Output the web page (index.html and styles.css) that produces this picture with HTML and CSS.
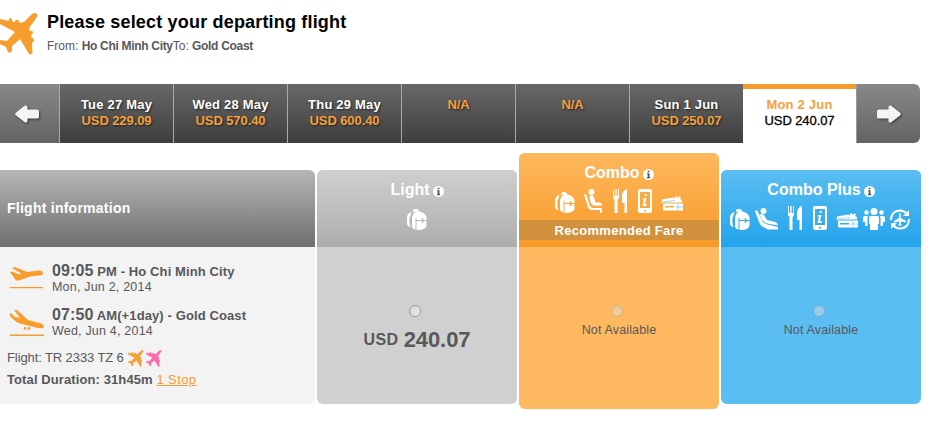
FILE: index.html
```html
<!DOCTYPE html>
<html lang="en">
<head>
<meta charset="utf-8">
<title>Select your departing flight</title>
<link rel="stylesheet" href="styles.css">
</head>
<body>
<svg class="sprite" aria-hidden="true">
  <symbol id="plane" viewBox="0 0 38 42"><path d="M32 1Q36-1 37 1Q38 3 35 7L29 15L30 18Q33 17 33 20L31 22L32 25Q34 25 34 28L32 30L32.500 40Q31 42 29 41L20 26L12 33V38Q10 41 8 39L6 34L0 31V27L7 28L15 19L0 11V6L9 8Q8 5 11 5L13 9H15Q15 6 18 7L20 10L24 9Z"/></symbol>
  <symbol id="bag" viewBox="0 0 20 21"><path fill-rule="evenodd" d="M6 3.500V1.500Q6 0 8 0H10Q12 0 12 2.500Q17 3 19 7Q20 9 19.500 11H17L15.500 9H14.500L15 11H9.500V9H8.500V20.500Q5 20 5 17V10Q5 5 8 3.500V2H7.500V3ZM9.500 12H15L14.500 14H15.500L17 12H19.500V17Q18 21 11 21H9.500Z"/><path d="M4.500 3Q0 4 0 9V15Q1 18 3.500 18L2.500 15Q1.500 10 3.500 6Z"/></symbol>
  <symbol id="seat" viewBox="0 0 18 24"><circle cx="7.500" cy="3" r="3"/><path d="M0 5.500L2 5L6 17Q7 19 9 19H17Q18 19 18 20V24H16V21H8Q5 21 4 18Z"/><path d="M5 7.500Q8 5 10 8L11.500 13.500H16Q18 14 18 16.500H11Q8 17 7 14Z"/></symbol>
  <symbol id="recline" viewBox="0 0 23 22"><circle cx="8.500" cy="3" r="3"/><path d="M0 3L2 2L8 14L11 16L23 19V21.500H13L8 19Q5 17 4 14Z"/><path d="M4.500 6.500Q8 5 9.500 8L12 12L20 14Q23 15 23 17.500L12 15.500Q9 14.500 7.500 12Z"/></symbol>
  <symbol id="food" viewBox="0 0 14 24"><path d="M0 0H1V7H2.300V0H3.700V7H5V0H6V8Q6 10 4.500 11V24H1.500V11Q0 10 0 8ZM14 0V24H11.500V14H9V6Q10 1 14 0Z"/></symbol>
  <symbol id="phone" viewBox="0 0 14 24"><path fill-rule="evenodd" d="M2 0H12Q14 0 14 2V22Q14 24 12 24H2Q0 24 0 22V2Q0 0 2 0ZM2 3V19H12V3ZM6 21V22.500H8V21Z"/><path d="M7 5H9L8.500 7H6.500ZM5 9H8.500L7 15H9L8.500 17H4.500L6 10.500H4.500Z"/></symbol>
  <symbol id="ticket" viewBox="0 0 22 16"><path fill-rule="evenodd" d="M1 4.500L12 2.500L14 3.500L14 1.500H16L17 3L18.500 1L20 2.500L19 4L21 5V7.500H0V6.500H1ZM2 8.500H22V15.500H3Q2 15.500 2 14ZM4 11V12.500H13V11Z"/><path class="cut" d="M14 5.500L2 7M17 8.500V15.500M14.500 12H22"/></symbol>
  <symbol id="people" viewBox="0 0 22 22"><circle cx="11" cy="3.500" r="3.500"/><circle cx="3.500" cy="4.500" r="2.200"/><circle cx="18.500" cy="4.500" r="2.200"/><path d="M7.500 8H14.500Q16 8 16 11V16H15V22H7V16H6V11Q6 8 7.500 8ZM1.500 8H5L4.500 10V18H2V14H0V10Q0 8 1.500 8ZM17 8H20.500Q22 8 22 10V14H20V18H17.500V10Z"/></symbol>
  <symbol id="cycle" viewBox="0 0 20 21"><path class="ring" d="M1 11Q1 2 10 1.500Q14 1.500 17 5M19 10Q19 19 10 19.500Q6 19.500 3 16"/><path d="M19 1V7H13ZM1 20V14H7ZM9.200 4.500H10.800V9L16 12V13.500L10.800 12.500V15L12.500 16.500H7.500L9.200 15V12.500L4 13.500V12L9.200 9Z"/></symbol>
  <symbol id="info" viewBox="0 0 11 11"><circle cx="5.500" cy="5.500" r="5.500"/><path class="mark" d="M4.700 1.800H6.500V3.200H4.700ZM4 4.200H6.500V8H7.200V9.200H4V8H4.700V5.300H4Z"/></symbol>
  <symbol id="arrow" viewBox="0 0 24 18"><path d="M0.500 8Q0 9 .5 10L10 17.500Q12.500 18 12.500 16V13.500H22Q24 13.500 24 12V6Q24 4.500 22 4.500H12.500V2Q12.500 0 10 .5Z"/></symbol>
</svg>

<header class="heading">
  <svg class="logo"><use href="#plane"/></svg>
  <div>
    <h1>Please select your departing flight</h1>
    <p class="route">From: <b>Ho Chi Minh City</b>To: <b>Gold Coast</b></p>
  </div>
</header>

<nav class="dates">
  <a class="step"><svg><use href="#arrow"/></svg></a>
  <a class="day"><b>Tue 27 May</b><span>USD 229.09</span></a>
  <a class="day"><b>Wed 28 May</b><span>USD 570.40</span></a>
  <a class="day"><b>Thu 29 May</b><span>USD 600.40</span></a>
  <a class="day"><span>N/A</span></a>
  <a class="day"><span>N/A</span></a>
  <a class="day"><b>Sun 1 Jun</b><span>USD 250.07</span></a>
  <a class="day active"><b>Mon 2 Jun</b><span>USD 240.07</span></a>
  <a class="step next"><svg><use href="#arrow"/></svg></a>
</nav>

<main class="fares">
  <section class="card details">
    <h2>Flight information</h2>
    <div class="body">
      <div class="leg">
        <svg class="legicon" viewBox="0 0 34 26"><path d="M2 1L5 0L17 5L28 3.500Q33 3 33 6Q33 8.500 29 8.500L20 9.500L9 13.500L6 13.500L0 5L2 4.500L8 7L12 7ZM0 20H33V21.300H0Z"/></svg>
        <div><p class="when"><strong>09:05</strong> PM - Ho Chi Minh City</p><p>Mon, Jun 2, 2014</p></div>
      </div>
      <div class="leg">
        <svg class="legicon" viewBox="0 0 34 26"><path d="M4 -1L7 -1L18 9L30 12Q34 13 34 16Q33 18 28 17L12 13Q6 12 0 5V2L2 3L5 6L10 7ZM0 23.500H34V25H0Z"/><circle cx="15" cy="17.500" r="1.400"/><circle cx="19" cy="17.500" r="1.400"/></svg>
        <div><p class="when"><strong>07:50</strong> AM(+1day) - Gold Coast</p><p>Wed, Jun 4, 2014</p></div>
      </div>
      <p class="number">Flight: TR 2333 TZ 6 <svg class="mini"><use href="#plane"/></svg><svg class="mini pink"><use href="#plane"/></svg></p>
      <p class="duration">Total Duration: 31h45m <a>1 Stop</a></p>
    </div>
  </section>

  <section class="card fare light">
    <div class="top">
      <h2>Light <svg class="info"><use href="#info"/></svg></h2>
      <div class="perks"><svg class="i-bag"><use href="#bag"/></svg></div>
    </div>
    <div class="body"><i class="radio"></i><p class="price"><span>USD</span> <strong>240.07</strong></p></div>
  </section>

  <section class="card fare combo">
    <div class="top">
      <h2>Combo <svg class="info"><use href="#info"/></svg></h2>
      <div class="perks"><svg class="i-bag"><use href="#bag"/></svg><svg class="i-seat"><use href="#seat"/></svg><svg class="i-tall"><use href="#food"/></svg><svg class="i-tall"><use href="#phone"/></svg><svg class="i-ticket"><use href="#ticket"/></svg></div>
      <p class="band">Recommended Fare</p>
    </div>
    <div class="body"><i class="radio off"></i><p class="na">Not Available</p></div>
  </section>

  <section class="card fare plus">
    <div class="top">
      <h2>Combo Plus <svg class="info"><use href="#info"/></svg></h2>
      <div class="perks"><svg class="i-bag"><use href="#bag"/></svg><svg class="i-recline"><use href="#recline"/></svg><svg class="i-tall"><use href="#food"/></svg><svg class="i-tall"><use href="#phone"/></svg><svg class="i-ticket"><use href="#ticket"/></svg><svg class="i-people"><use href="#people"/></svg><svg class="i-cycle"><use href="#cycle"/></svg></div>
    </div>
    <div class="body"><i class="radio off"></i><p class="na">Not Available</p></div>
  </section>
</main>
</body>
</html>
```
FILE: styles.css
```css
* { box-sizing: border-box; }
body {
  margin: 0;
  width: 946px;
  height: 424px;
  overflow: hidden;
  background: #fff;
  color: #58585a;
  font: 12px/16px "Liberation Sans", Arial, sans-serif;
}
h1, h2, p { margin: 0; }
svg { display: block; fill: currentColor; flex: none; }
.sprite { position: absolute; width: 0; height: 0; }

.heading { display: flex; height: 84px; padding-top: 13px; }
.logo { width: 38px; height: 42px; margin-right: 9px; color: #f79c2d; }
h1 { color: #000; font-size: 18px; line-height: 18px; letter-spacing: .18px; }
.route { margin-top: 7px; line-height: 16px; }
.route b { letter-spacing: -.31px; }

.dates {
  display: flex;
  width: 920px;
  height: 59px;
  border-radius: 0 6px 6px 0;
  overflow: hidden;
}
.step {
  display: flex;
  align-items: center;
  justify-content: center;
  width: 59px;
  padding: 1px 0 0;
  background: linear-gradient(#888, #646464);
  color: #f4f4f4;
}
.step svg { width: 24px; height: 18px; filter: drop-shadow(1px 1px 1px #333); margin-left: -5px; }
.next { width: 64px; border-left: 1px solid #999; }
.next svg { transform: scaleX(-1); filter: drop-shadow(-1px 1px 1px #333); margin: 0; }
.day {
  width: 114px;
  padding-top: 13px;
  border-left: 1px solid #aaa;
  background: linear-gradient(#686868, #3e3e3e);
  color: #f4a13c;
  font-size: 13px;
  font-weight: bold;
  text-align: center;
  text-shadow: 1px 1px 2px #222;
}
.day b, .day span { display: block; }
.day b { color: #fff; letter-spacing: .2px; }
.day span { letter-spacing: -.1px; }
.day.active {
  width: 113px;
  padding-top: 8px;
  border-top: 5px solid #f79c2d;
  border-left: 0;
  background: #fff;
  color: #000;
  font-weight: normal;
  text-shadow: none;
}
.day.active b { color: #f4a13c; }
.day.active span { -webkit-text-stroke: .3px #000; }

.fares { display: flex; gap: 2px; padding-top: 10px; }
.card {
  width: 200px;
  height: 234px;
  margin-top: 17px;
  border-radius: 6px;
  overflow: hidden;
}
.details { width: 315px; border-radius: 0 6px 6px 0; background: #f3f3f3; }
.details h2 {
  height: 77px;
  padding-left: 7px;
  background: linear-gradient(#b6b6b6, #6f6f6f);
  color: #fff;
  font-size: 14px;
  letter-spacing: .25px;
  line-height: 77px;
}
.details .body { padding: 15px 7px; }
.leg { display: flex; height: 44px; }
.legicon { width: 34px; height: 26px; margin: 5px 8px 0 3px; color: #f79c2d; overflow: visible; }
.leg p { margin-top: -1px; font-size: 12.500px; letter-spacing: .2px; }
.leg .when { margin: 0; font-size: 13px; font-weight: bold; line-height: 17px; letter-spacing: .11px; }
.when strong { font-size: 16px; }
.number { display: flex; align-items: center; height: 16px; font-size: 13px; letter-spacing: -.1px; }
.mini { width: 16px; height: 17px; margin-left: 4px; color: #f4a13c; }
.pink { margin-left: 2px; color: #ff6bac; }
.duration { margin-top: 6px; font-size: 13px; font-weight: bold; letter-spacing: .1px; }
.duration a { color: #f79c2d; font-weight: normal; letter-spacing: .4px; text-decoration: underline; }

.fare { text-align: center; }
.top { height: 77px; padding-top: 10px; color: #fff; }
.top h2 {
  display: flex;
  justify-content: center;
  align-items: center;
  font-size: 16px;
  line-height: 19px;
}
.info { width: 11px; height: 11px; margin: 4px 0 0 3px; }
.mark { fill: #555; }
.perks { display: flex; justify-content: center; align-items: flex-end; height: 24px; margin-top: 7px; }
.i-bag { width: 20px; height: 21px; }
.i-seat { width: 18px; height: 24px; margin-left: 9px; }
.i-recline { width: 23px; height: 22px; margin-left: 5px; }
.i-tall { width: 14px; height: 24px; margin-left: 11px; }
.i-recline + .i-tall { margin-left: 10px; }
.i-ticket { width: 22px; height: 16px; margin: 0 0 2px 9px; }
.i-people { width: 22px; height: 22px; margin-left: 5px; }
.i-cycle { width: 20px; height: 21px; margin-left: 5px; }
.plus .perks { padding-right: 2px; }
.combo .perks { padding-right: 1px; }
.cut { fill: none; stroke: #7fc8f3; stroke-width: .7; }
.ring { fill: none; stroke: #fff; stroke-width: 2; }

.light { background: #d0d0d0; }
.light .top { background: linear-gradient(#cfcfcf, #adadad); }
.combo { height: 256px; margin-top: 0; background: #feb960; }
.combo .top { height: 94px; background: linear-gradient(#feb85e, #f69a27); }
.combo .cut { stroke: #fab052; }
.plus { background: #5bbef2; }
.plus .top { background: linear-gradient(#5bbef2, #22a4ec); }
.band {
  height: 20px;
  margin-top: 7px;
  background: #d1913d;
  font-size: 13px;
  font-weight: bold;
  letter-spacing: .3px;
  line-height: 21px;
}
.fare .body { padding-top: 58px; }
.radio {
  display: block;
  width: 12px;
  height: 12px;
  margin: 0 auto;
  border: 1px solid #999;
  border-radius: 50%;
  background: linear-gradient(135deg, #d4d4d4, #eee);
  transform: translateX(-2px);
}
.radio.off { opacity: .45; }
.price { margin-top: 11px; font-size: 16px; font-weight: bold; line-height: 24px; }
.price span { position: relative; top: -2px; letter-spacing: .3px; }
.price strong { margin-left: 1px; font-size: 22px; letter-spacing: -.1px; }
.na { margin-top: 5px; font-size: 12.500px; letter-spacing: .15px; }
```
